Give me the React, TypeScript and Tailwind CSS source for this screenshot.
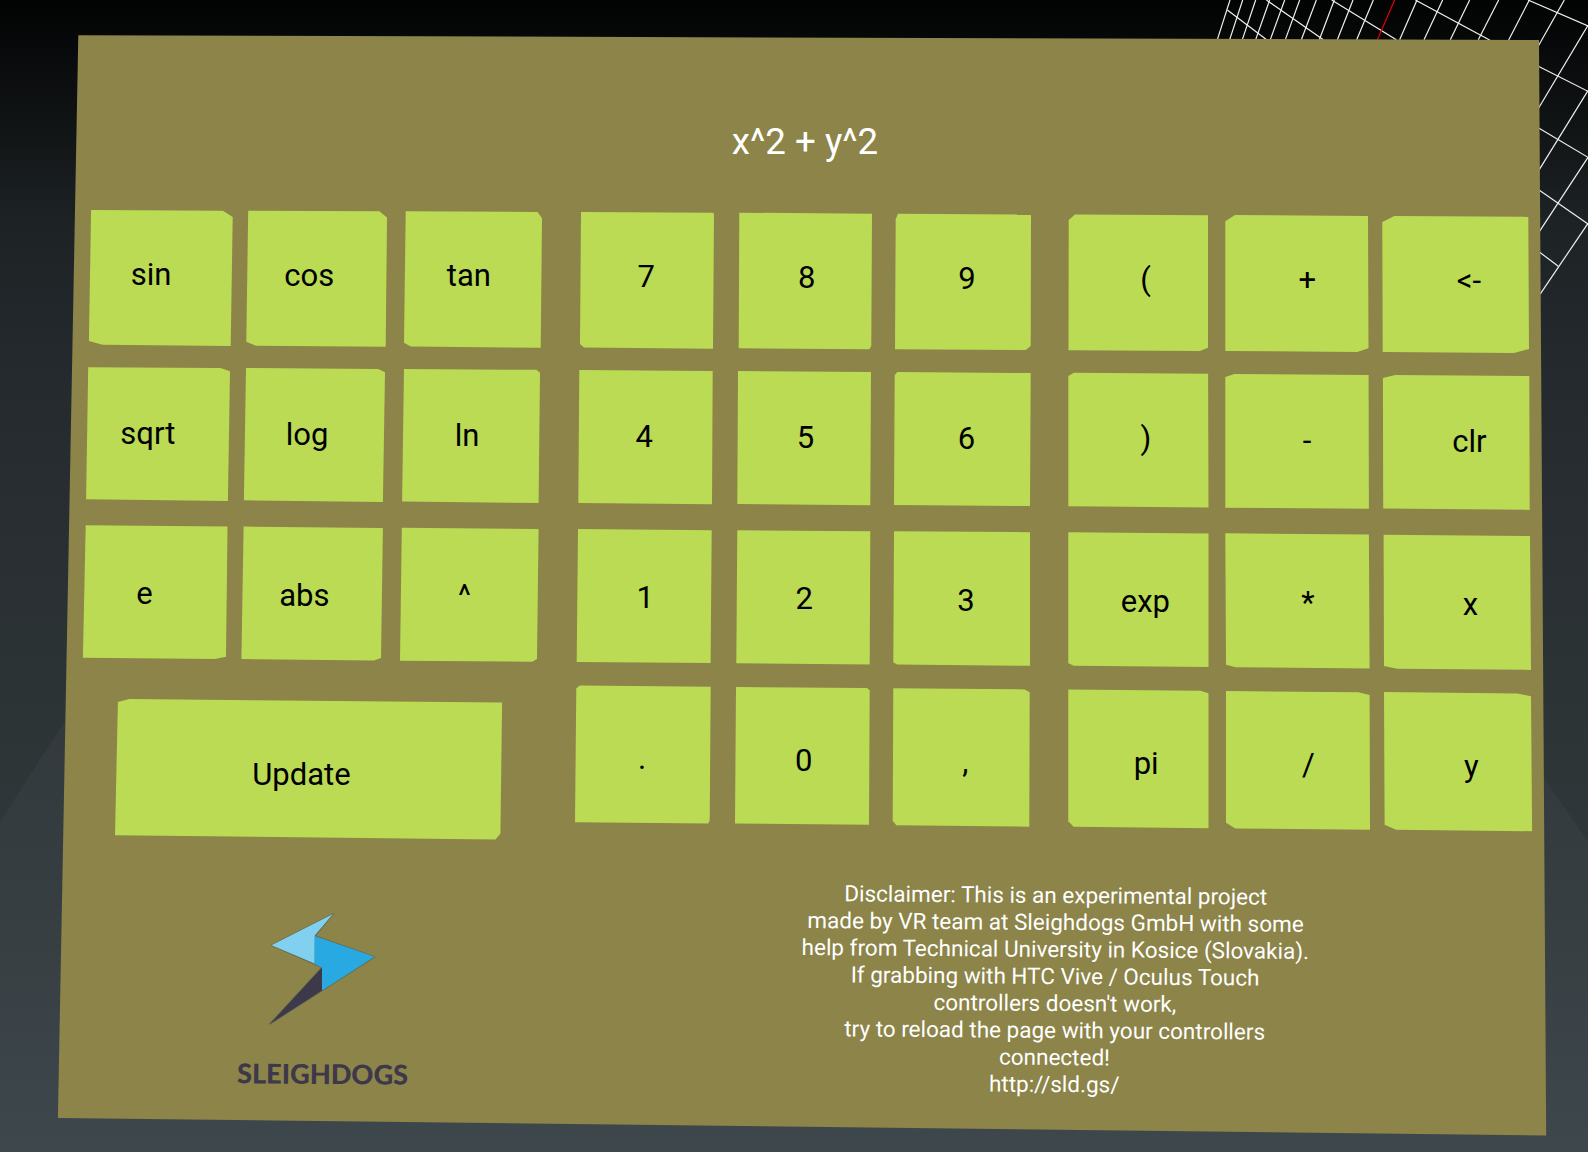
import React from "react";

type Point = [number, number];

type KeySpec = {
  label: string;
  /** Horizontal centre and baseline of the caption, in scene units. */
  at: Point;
  /** Outline of the visible key face, in scene units. */
  face: Point[];
  wide?: boolean;
};

const COLS = [80, 240, 400, 574, 734, 892, 1067, 1224, 1381];
const ROWS = [208, 365, 523, 683];
const CELL_W = [160, 160, 174, 160, 158, 175, 157, 157, 155];
const CELL_H = [157, 158, 160, 159];

const KEYS: KeySpec[][] = [
  [
    { label: "sin", at: [151, 285], face: [[91.1, 210], [222.9, 210.8], [232.7, 217], [230.7, 346], [102.5, 344.7], [88.9, 341]] },
    { label: "cos", at: [309.2, 285.8], face: [[248.2, 210.7], [379.3, 211.3], [387, 217.5], [385.7, 346.7], [256, 345.7], [246.3, 341.8]] },
    { label: "tan", at: [468.8, 286.2], face: [[405.7, 211.3], [537.5, 212], [542, 218.3], [540.7, 347.7], [410.7, 346.5], [404, 342.7]] },
    { label: "7", at: [646.3, 287], face: [[581, 212], [713, 212.8], [714, 214], [713, 348.7], [584, 347.5], [580, 344]] },
    { label: "8", at: [806.6, 288], face: [[739.3, 212.7], [872, 213.7], [871.3, 346], [869.3, 349.3], [738.7, 348.3]] },
    { label: "9", at: [967, 288.6], face: [[898, 213.7], [895.7, 219.3], [895, 349.2], [1025.7, 350], [1030.7, 346], [1031, 214.5]] },
    { label: "(", at: [1145.6, 289.8], face: [[1075, 214.5], [1068.7, 220], [1068.5, 350.3], [1200, 351], [1208, 347.7], [1208, 215.2]] },
    { label: "+", at: [1307.3, 290.5], face: [[1235, 215], [1225.3, 221.3], [1225.3, 351], [1357.3, 352], [1368.5, 348.3], [1368, 215.9]] },
    { label: "<-", at: [1469, 291.5], face: [[1394.3, 216], [1382.3, 222], [1382.7, 352], [1514, 352.9], [1529, 349], [1528.3, 216.7]] },
  ],
  [
    { label: "sqrt", at: [147.8, 443.9], face: [[88.2, 367.3], [220.4, 368], [230, 371.3], [227.9, 500.9], [86.1, 499.3]] },
    { label: "log", at: [307.1, 444.8], face: [[246, 368], [378.2, 369], [385, 372.3], [382.9, 502], [243.9, 500.3]] },
    { label: "ln", at: [467, 445.8], face: [[404, 369], [536.4, 369.8], [540, 372.7], [538.6, 503], [402.1, 501.5]] },
    { label: "4", at: [644.2, 447], face: [[579.3, 370], [712.7, 371], [712, 504.2], [578.3, 502.9]] },
    { label: "5", at: [805.5, 447.7], face: [[738, 371], [871, 372], [870.3, 505.2], [737.3, 504]] },
    { label: "6", at: [966.4, 448.5], face: [[897.3, 372], [894.7, 375], [894, 505], [1030, 506], [1030.7, 373]] },
    { label: ")", at: [1145.9, 449], face: [[1073.9, 372.8], [1068.3, 376], [1068.3, 506.3], [1208.5, 507.4], [1208.1, 373.8]] },
    { label: "-", at: [1307, 451], face: [[1234.3, 374], [1225.3, 377], [1225.3, 507.7], [1368.9, 508.8], [1368.6, 375]] },
    { label: "clr", at: [1469.4, 452], face: [[1395.1, 375], [1382.9, 378], [1383.2, 508.6], [1529.7, 509.9], [1529.3, 376]] },
  ],
  [
    { label: "e", at: [144.6, 604], face: [[85.7, 525.2], [227.5, 526.5], [226, 656.7], [215, 659], [82.9, 657.8]] },
    { label: "abs", at: [304.4, 605.3], face: [[243.6, 526.6], [382.9, 527.9], [381, 657.9], [374, 660.4], [241.4, 659]] },
    { label: "^", at: [464.6, 606], face: [[401.8, 527.8], [538.6, 529], [537, 659], [532, 661.8], [400, 660.7]] },
    { label: "1", at: [645.2, 608], face: [[578, 529], [711.7, 530.2], [710.6, 663], [576.7, 661.9]] },
    { label: "2", at: [804.2, 609], face: [[737.3, 530.2], [870.3, 531.3], [869.7, 664.4], [736.3, 663.2]] },
    { label: "3", at: [966, 610.3], face: [[894, 531.2], [1030, 532.2], [1030, 665.8], [897, 664.6], [893.3, 662.3]] },
    { label: "exp", at: [1145.4, 611.9], face: [[1068.3, 532.2], [1208.5, 533.5], [1208.5, 667.1], [1073.9, 665.8], [1068.3, 663.3]] },
    { label: "*", at: [1308, 613], face: [[1225.3, 533.3], [1368.9, 534.6], [1369.6, 668.5], [1235.7, 667.2], [1226, 664.7]] },
    { label: "x", at: [1470.4, 614.3], face: [[1383.6, 534.8], [1530, 536], [1531, 669.9], [1397.2, 668.8], [1384, 665.9]] },
  ],
  [
    { label: "Update", wide: true, at: [301.4, 784.6], face: [[129.3, 699], [117.9, 702], [115, 835.3], [495.4, 839.4], [500.4, 833.7], [502.1, 702.4]] },
    { label: ".", at: [642, 769.3], face: [[580, 685.4], [576.3, 688.3], [575, 822.2], [708.3, 823.6], [709.7, 820], [710.7, 686.8]] },
    { label: "0", at: [803.6, 771], face: [[736, 687], [867, 688], [869.7, 690.3], [869, 824.8], [735, 823.4]] },
    { label: ",", at: [965.2, 772], face: [[893.3, 688.2], [1024.7, 689.4], [1029.7, 692.3], [1029.3, 826.7], [896.3, 825.2], [892.7, 820.7]] },
    { label: "pi", at: [1146.2, 774], face: [[1068.3, 689.5], [1200.4, 690.8], [1208.5, 693.3], [1208.5, 828.2], [1073.6, 826.8], [1068.3, 821.3]] },
    { label: "/", at: [1308.3, 775], face: [[1226, 691], [1358.4, 692.2], [1369.6, 695], [1370, 829.8], [1235.4, 828.4], [1226, 822.7]] },
    { label: "y", at: [1471.3, 777], face: [[1384, 692], [1517.5, 693.4], [1531, 696.3], [1532.1, 831.2], [1396.2, 829.8], [1384.6, 824.7]] },
  ],
];

const FONT = 31;

function Key({ spec, col, row }: { spec: KeySpec; col: number; row: number }) {
  const x0 = COLS[col];
  const y0 = ROWS[row];
  const w = spec.wide ? CELL_W[0] + CELL_W[1] + CELL_W[2] : CELL_W[col];
  const h = CELL_H[row];
  const outline = spec.face.map(([x, y]) => `${(x - x0).toFixed(1)}px ${(y - y0).toFixed(1)}px`).join(", ");
  const dx = spec.at[0] - (x0 + w / 2);
  const dy = spec.at[1] - (y0 + h / 2 + FONT * 0.3417);
  return (
    <button
      className={
        spec.wide
          ? "col-span-3 flex items-center justify-center bg-[#bbdb55]"
          : "flex items-center justify-center bg-[#bbdb55]"
      }
      style={{ clipPath: `polygon(${outline})` }}
    >
      <span
        className="text-[31px] leading-none whitespace-nowrap text-black"
        style={{ transform: `translate(${dx.toFixed(1)}px, ${dy.toFixed(1)}px)` }}
      >
        {spec.label}
      </span>
    </button>
  );
}

// Segments of the receding ground grid: x1, y1, x2, y2 in thirds of a pixel.
const GRID_LINES: number[][] = [
  [150, 0, 112, 119], [188, 0, 149, 119], [227, 0, 187, 119], [269, 0, 227, 119], [314, 0, 271, 119],
  [359, 0, 316, 119], [409, 0, 364, 119], [463, 0, 418, 119], [519, 0, 472, 119], [580, 0, 530, 119],
  [711, 0, 659, 119], [788, 0, 732, 119], [869, 0, 811, 119], [956, 0, 895, 119], [1048, 0, 986, 120],
  [1153, 0, 1075, 138], [1224, 76, 1076, 324], [1224, 272, 1076, 512], [1224, 472, 1078, 695], [1224, 670, 1080, 883],
  [142, 30, 260, 119], [259, 0, 430, 119], [455, 0, 649, 119], [706, 0, 930, 121], [1044, 0, 1224, 78],
  [1075, 199, 1224, 274], [1076, 384, 1224, 472], [1076, 569, 1224, 672], [1078, 756, 1135, 799],
];

function Scene() {
  return (
    <svg className="absolute inset-0 h-[1152px] w-[1588px]" viewBox="0 0 1588 1152" aria-hidden="true">
      <defs>
        <linearGradient id="floor" x1="0" y1="0" x2="0" y2="1">
          <stop offset="0" stopColor="#33393c" />
          <stop offset="0.5" stopColor="#373f43" />
          <stop offset="1" stopColor="#3e474c" />
        </linearGradient>
      </defs>
      <path d="M65 721 L0 822 V1152 H1588 V842 L1544 778 V721 Z" fill="url(#floor)" />
      <g transform="translate(1180 0) scale(0.33333)" strokeWidth="3.6" stroke="#f0f0f0">
        {GRID_LINES.map(([x1, y1, x2, y2], i) => (
          <line key={i} x1={x1} y1={y1} x2={x2} y2={y2} />
        ))}
        <line x1="644" y1="0" x2="592" y2="119" stroke="#e60000" />
      </g>
    </svg>
  );
}

function Logo() {
  return (
    <div className="flex w-[200px] flex-col items-center pt-[68px]">
      <svg className="h-[117px] w-[113px] -translate-x-[0.5px]" viewBox="140 60 340 350" aria-hidden="true">
        <path
          d="M340 71 L155 165 L307 232 L150 402 L465 200 L286 137 Z"
          fill="none"
          stroke="#5f6a50"
          strokeWidth="4"
          strokeLinejoin="round"
        />
        <path d="M340 71 L155 165 L285 220 V136 Z" fill="#82d0ef" />
        <path d="M285 137 L465 200 L306 302 V232 L284 220 Z" fill="#28a9e1" />
        <path d="M307 232 V301 L150 402 Z" fill="#3d384a" />
      </svg>
      <div className="mt-[30.5px] rotate-[0.45deg] font-[Lato] text-[27.2px] leading-[32px] font-black text-[#3d384a]">
        SLEIGHDOGS
      </div>
    </div>
  );
}

const DISCLAIMER = [
  "Disclaimer: This is an experimental project",
  "made by VR team at Sleighdogs GmbH with some",
  "help from Technical University in Kosice (Slovakia).",
  "If grabbing with HTC Vive / Oculus Touch",
  "controllers doesn't work,",
  "try to reload the page with your controllers",
  "connected!",
  "http://sld.gs/",
];

export default function App() {
  return (
    <div className="relative h-[1152px] w-[1588px] overflow-hidden bg-[linear-gradient(180deg,#020303_0px,#0b0d0e_75px,#131718_147px,#1d2225_220px,#23292c_353px,#282e31_514px,#2d3436_720px,#30373a_850px)] font-[Roboto,sans-serif]">
      <Scene />
      <main className="relative flex h-full w-full flex-col bg-[#8c8448] [clip-path:polygon(78.3px_35.2px,1539px_40px,1546.2px_1135.6px,57.9px_1118px)]">
        <header className="flex h-[208px] items-center justify-center pt-[77px] pl-[22px]">
          <h1 className="text-[36.7px] leading-none text-white">x^2 + y^2</h1>
        </header>
        <section className="grid grid-cols-[160px_160px_174px_160px_158px_175px_157px_157px_155px] grid-rows-[157px_158px_160px_159px] pl-[80px]">
          {KEYS.map((keys, row) =>
            keys.map((spec, i) => (
              <Key key={spec.label} spec={spec} row={row} col={row === 3 && i > 0 ? i + 2 : i} />
            )),
          )}
        </section>
        <footer className="flex pl-[223px]">
          <Logo />
          <p className="mt-[39.5px] ml-[352.3px] w-[560px] rotate-[0.45deg] text-center text-[22.5px] leading-[27px] whitespace-nowrap text-white">
            {DISCLAIMER.map((line) => (
              <span key={line} className="block">
                {line}
              </span>
            ))}
          </p>
        </footer>
      </main>
    </div>
  );
}
